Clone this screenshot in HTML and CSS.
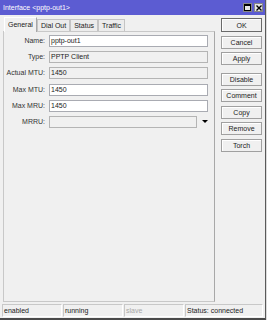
FILE: index.html
```html
<!DOCTYPE html>
<html lang="en">
<head>
    <meta charset="UTF-8">
    <title>Interface &lt;pptp-out1&gt;</title>
    <link rel="stylesheet" href="styles.css">
</head>
<body>
    <div class="window">
        <div class="titlebar">
            <span class="title">Interface &lt;pptp-out1&gt;</span>
            <span class="tb-btns">
                <span class="tb-btn"><span class="max-box"></span></span>
                <span class="tb-btn">
                    <svg width="6" height="6" viewBox="0 0 6 6"><path d="M0.5 0.5L5.5 5.5M5.5 0.5L0.5 5.5" stroke="#000" stroke-width="1.4"/></svg>
                </span>
            </span>
        </div>

        <div class="content">
            <div class="main">
                <div class="tabs">
                    <div class="tab active">General</div>
                    <div class="tab">Dial Out</div>
                    <div class="tab">Status</div>
                    <div class="tab">Traffic</div>
                </div>
                <div class="panel">
                    <div class="form">
                        <label>Name:</label>
                        <div class="field">pptp-out1</div>

                        <label>Type:</label>
                        <div class="field disabled">PPTP Client</div>

                        <label>Actual MTU:</label>
                        <div class="field disabled">1450</div>

                        <label>Max MTU:</label>
                        <div class="field">1450</div>

                        <label>Max MRU:</label>
                        <div class="field">1450</div>

                        <label>MRRU:</label>
                        <div class="select-row">
                            <div class="field disabled short"></div>
                            <span class="arrow"></span>
                        </div>
                    </div>
                </div>
            </div>

            <div class="side">
                <button class="btn default">OK</button>
                <button class="btn">Cancel</button>
                <button class="btn">Apply</button>
                <button class="btn spaced">Disable</button>
                <button class="btn">Comment</button>
                <button class="btn">Copy</button>
                <button class="btn">Remove</button>
                <button class="btn">Torch</button>
            </div>
        </div>

        <div class="statusbar">
            <div class="cell">enabled</div>
            <div class="cell">running</div>
            <div class="cell muted">slave</div>
            <div class="cell wide">Status: connected</div>
        </div>
    </div>
</body>
</html>
```

FILE: styles.css
```css
body {
    margin: 0;
    width: 267px;
    height: 320px;
    overflow: hidden;
    background-color: #dcdcdc;
    font-family: "Liberation Sans", Arial, sans-serif;
    font-size: 7px;
    color: #222;
}

.window {
    box-sizing: border-box;
    width: 266px;
    height: 320px;
    background-color: #f0f0f0;
    border-right: 1px solid #5a5a5a;
    border-bottom: 2px solid #4a4a4a;
    display: flex;
    flex-direction: column;
}

.titlebar {
    height: 15px;
    flex: none;
    background-color: #5c5cd2;
    color: #fff;
    display: flex;
    align-items: center;
    justify-content: space-between;
    padding: 0 2px 0 3px;
}

.tb-btns {
    display: flex;
    gap: 2px;
}

.tb-btn {
    width: 9px;
    height: 9px;
    box-sizing: border-box;
    background-color: #e6e6e6;
    border: 1px solid #888;
    display: flex;
    align-items: center;
    justify-content: center;
}

.max-box {
    width: 5px;
    height: 4px;
    border: 1px solid #000;
    border-top-width: 2px;
}

.content {
    flex: 1;
    display: flex;
    padding-top: 2px;
}

.main {
    width: 212px;
    margin-left: 3px;
    display: flex;
    flex-direction: column;
}

.tabs {
    height: 14px;
    display: flex;
    align-items: flex-end;
    padding-left: 1px;
}

.tab {
    height: 12px;
    line-height: 11px;
    padding: 0 3px;
    border: 1px solid #c4c4c4;
    border-bottom: none;
    background-color: #ececec;
    box-sizing: border-box;
}

.tab.active {
    height: 15px;
    margin-bottom: -1px;
    line-height: 13px;
    background-color: #f0f0f0;
    border-color: #fff #a8a8a8 #f0f0f0 #fff;
    position: relative;
}

.panel {
    flex: 1;
    margin-bottom: 1px;
    border: 1px solid #c8c8c8;
    border-right-color: #a8a8a8;
    padding-top: 3px;
}

.form {
    display: grid;
    grid-template-columns: 42px 159px;
    grid-auto-rows: 12px;
    column-gap: 3px;
    row-gap: 4.2px;
}

.form label {
    text-align: right;
    line-height: 12px;
    padding-right: 1px;
    color: #333;
}

.field {
    box-sizing: border-box;
    height: 12px;
    line-height: 10px;
    padding-left: 1px;
    background-color: #fff;
    border: 1px solid #a9abb2;
}

.field.disabled {
    background-color: #f0f0f0;
    border-color: #b4b4b4;
}

.select-row {
    display: flex;
    align-items: center;
}

.field.short {
    width: 148px;
}

.arrow {
    margin-left: 5px;
    width: 0;
    height: 0;
    border-left: 3px solid transparent;
    border-right: 3px solid transparent;
    border-top: 3px solid #000;
}

.side {
    flex: 1;
    display: flex;
    flex-direction: column;
    align-items: flex-start;
    gap: 3.5px;
    padding-left: 6px;
    padding-top: 1px;
}

.btn {
    width: 41px;
    height: 13px;
    padding: 0;
    font-family: inherit;
    font-size: 7px;
    color: #222;
    background-color: #f0f0f0;
    border: 1px solid #a0a0a0;
    box-shadow: inset 1px 1px 0 #fff;
}

.btn.default {
    height: 14px;
    border-color: #6a6a6a;
}

.btn.spaced {
    margin-top: 4px;
}

.statusbar {
    height: 15px;
    flex: none;
    display: flex;
    padding: 1px 2px 0 2px;
    box-sizing: border-box;
    gap: 1px;
}

.cell {
    width: 60px;
    height: 13px;
    line-height: 12px;
    box-sizing: border-box;
    padding-left: 1px;
    border: 1px solid;
    border-color: #c8c8c8 #fff #fff #c8c8c8;
}

.cell.muted {
    color: #a8a8a8;
}

.cell.wide {
    flex: 1;
}
```
